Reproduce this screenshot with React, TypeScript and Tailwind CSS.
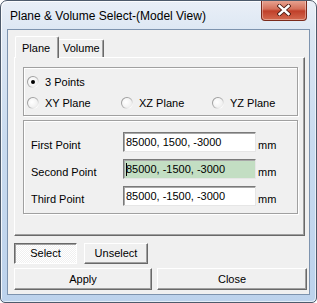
import React from "react";

const font = { fontFamily: '"Liberation Sans", Arial, sans-serif' };

function Radio({ checked, label }: { checked?: boolean; label: string }) {
  return (
    <div className="flex items-center h-[14px]">
      <div className="relative w-[12px] h-[12px] rounded-full bg-[linear-gradient(135deg,#8a8a8a,#b5b5b5_50%,#ffffff_85%)] p-px shrink-0">
        <div className="w-full h-full rounded-full bg-[radial-gradient(circle_at_40%_40%,#ffffff,#f2f2f2_60%,#dcdcdc)] flex items-center justify-center">
          {checked && <div className="w-[4px] h-[4px] rounded-full bg-black" />}
        </div>
      </div>
      <span className="ml-[6px] text-[11px] leading-[14px] text-black">{label}</span>
    </div>
  );
}

function Field({ label, value, green, caret }: { label: string; value: string; green?: boolean; caret?: boolean }) {
  return (
    <div className="flex items-end h-[20px]">
      <div className="w-[92px] text-[11px] leading-[13px] text-black">{label}</div>
      <div
        className={`w-[133px] h-[20px] border border-t-[#7a7a7a] border-l-[#7a7a7a] border-r-[#e6e6e6] border-b-[#e6e6e6] shadow-[inset_1px_1px_0_#a8a8a8] flex items-center pl-[2px] text-[11px] text-black ${green ? "bg-[#c3dec3]" : "bg-white"}`}
      >
        {caret && <span className="inline-block w-px h-[13px] bg-black -mr-px" />}
        <span>{value}</span>
      </div>
      <div className="ml-[2px] text-[11px] leading-[13px] text-black">mm</div>
    </div>
  );
}

function Btn({ children, w, h, pressed }: { children: React.ReactNode; w: string; h: string; pressed?: boolean }) {
  return (
    <div
      className={`${w} ${h} flex items-center justify-center text-[11px] text-black border ${
        pressed
          ? "border-t-[#696969] border-l-[#696969] border-r-white border-b-white shadow-[inset_1px_1px_0_#a0a0a0] bg-[conic-gradient(#ffffff_25%,#f0f0f0_0_50%,#ffffff_0_75%,#f0f0f0_0)] bg-[length:2px_2px]"
          : "border-t-white border-l-white border-r-[#696969] border-b-[#696969] shadow-[inset_-1px_-1px_0_#a0a0a0] bg-[#f0f0f0]"
      }`}
    >
      {children}
    </div>
  );
}

export default function App() {
  return (
    <div style={font} className="w-[317px] h-[303px] bg-white">
      <div className="relative w-[317px] h-[303px] border border-[#4d5a6b] rounded-t-[7px] rounded-b-[5px] bg-[linear-gradient(180deg,#e9eff7_0px,#dde7f3_30px,#c9dbef_140px,#bcd2ec_303px)] shadow-[inset_1px_1px_0_rgba(255,255,255,0.8),inset_-1px_-1px_0_rgba(255,255,255,0.6)] overflow-hidden">
        {/* title bar */}
        <div className="h-[28px] flex items-center pl-[9px] pt-[1px]">
          <span className="text-[12px] text-black">Plane &amp; Volume Select-(Model View)</span>
        </div>
        {/* close button */}
        <div className="absolute top-[-1px] right-[9px] w-[46px] h-[21px] rounded-b-[4px] border border-[#7a2a1c] border-t-0 bg-[linear-gradient(180deg,#e9a896_0%,#d4705a_45%,#c0402a_55%,#d46a50_100%)] shadow-[inset_0_0_0_1px_rgba(255,255,255,0.35)] flex items-center justify-center">
          <svg width="14" height="12" viewBox="0 0 14 12">
            <path d="M2.5 2 L11.5 10 M11.5 2 L2.5 10" stroke="#4a1a12" strokeWidth="4.2" strokeLinecap="square" />
            <path d="M2.5 2 L11.5 10 M11.5 2 L2.5 10" stroke="#ffffff" strokeWidth="2.4" strokeLinecap="square" />
          </svg>
        </div>
        {/* client */}
        <div className="ml-[6px] w-[303px] h-[266px] border border-[#7d93ae] bg-[#f0f0f0] pt-[6px] pl-[6px]">
          {/* tabs */}
          <div className="flex items-end h-[21px] pl-px">
            <div className="relative z-10 w-[44px] h-[22px] -mb-px bg-[#f0f0f0] border-t border-l border-r border-t-white border-l-white border-r-[#696969] shadow-[inset_-1px_0_0_#a0a0a0] rounded-t-[2px] flex items-start pt-[3px] pl-[6px] text-[11px] text-black">
              Plane
            </div>
            <div className="w-[45px] h-[18px] bg-[#f0f0f0] border-t border-r border-t-white border-r-[#696969] shadow-[inset_-1px_0_0_#a0a0a0] rounded-tr-[2px] flex items-center pl-[4px] text-[11px] text-black">
              Volume
            </div>
          </div>
          {/* panel */}
          <div className="w-[291px] h-[179px] border border-t-white border-l-white border-r-[#696969] border-b-[#696969] shadow-[inset_-1px_-1px_0_#a0a0a0] pl-[8px] pt-[9px]">
            {/* group 1 */}
            <div className="w-[275px] h-[49px] border border-[#a0a0a0] shadow-[1px_1px_0_#fff,inset_1px_1px_0_#fff] pl-[3px] pt-[7px] flex flex-col gap-[7px]">
              <Radio checked label="3 Points" />
              <div className="flex">
                <div className="w-[94px]">
                  <Radio label="XY Plane" />
                </div>
                <div className="w-[91px]">
                  <Radio label="XZ Plane" />
                </div>
                <Radio label="YZ Plane" />
              </div>
            </div>
            {/* group 2 */}
            <div className="mt-[4px] w-[275px] h-[94px] border border-[#a0a0a0] shadow-[1px_1px_0_#fff,inset_1px_1px_0_#fff] pl-[7px] pt-[11px] flex flex-col gap-[7px]">
              <Field label="First Point" value="85000, 1500, -3000" />
              <Field label="Second Point" value="85000, -1500, -3000" green caret />
              <Field label="Third Point" value="85000, -1500, -3000" />
            </div>
          </div>
          {/* buttons */}
          <div className="mt-[7px] flex gap-[7px]">
            <Btn w="w-[63px]" h="h-[21px]" pressed>
              Select
            </Btn>
            <Btn w="w-[64px]" h="h-[21px]">
              Unselect
            </Btn>
          </div>
          <div className="mt-[4px] flex gap-[5px]">
            <Btn w="w-[138px]" h="h-[22px]">
              Apply
            </Btn>
            <Btn w="w-[150px]" h="h-[22px]">
              Close
            </Btn>
          </div>
        </div>
      </div>
    </div>
  );
}
